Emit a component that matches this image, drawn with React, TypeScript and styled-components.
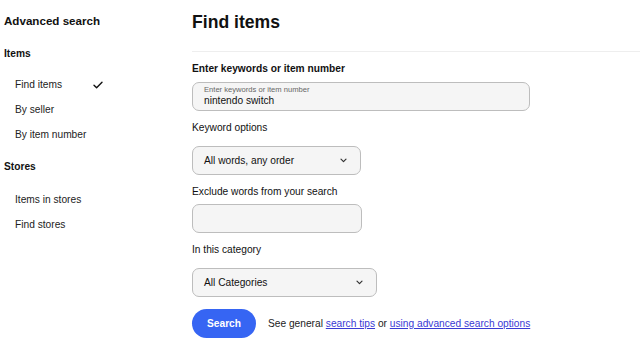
import React from 'react';
import styled, { createGlobalStyle } from 'styled-components';

const GlobalStyle = createGlobalStyle`
  html, body {
    margin: 0;
    padding: 0;
    background: #fff;
    font-family: "Liberation Sans", Arial, sans-serif;
    color: #111;
  }
`;

type NavItem = { label: string; active?: boolean };

const navGroups: { title: string; listGap: number; items: NavItem[] }[] = [
  {
    title: 'Items',
    listGap: 11,
    items: [{ label: 'Find items', active: true }, { label: 'By seller' }, { label: 'By item number' }],
  },
  {
    title: 'Stores',
    listGap: 13,
    items: [{ label: 'Items in stores' }, { label: 'Find stores' }],
  },
];

const Chevron: React.FC = () => (
  <svg width="7" height="5" viewBox="0 0 7 5" fill="none">
    <path d="M1 1.2l2.5 2.5L6 1.2" stroke="#333" strokeWidth="1.2" strokeLinecap="round" strokeLinejoin="round" />
  </svg>
);

const Check: React.FC = () => (
  <svg width="10" height="8" viewBox="0 0 10 8" fill="none">
    <path d="M1 4.2l2.6 2.6L9 1.2" stroke="#111" strokeWidth="1.4" strokeLinecap="round" strokeLinejoin="round" />
  </svg>
);

const App: React.FC = () => {
  return (
    <Page>
      <GlobalStyle />
      <Sidebar>
        <SideTitle>Advanced search</SideTitle>
        {navGroups.map((group) => (
          <NavGroup key={group.title}>
            <GroupTitle>{group.title}</GroupTitle>
            <NavList gap={group.listGap}>
              {group.items.map((item) => (
                <NavLink key={item.label}>
                  <span>{item.label}</span>
                  {item.active && <Check />}
                </NavLink>
              ))}
            </NavList>
          </NavGroup>
        ))}
      </Sidebar>
      <Main>
        <Heading>Find items</Heading>
        <Divider />
        <Form>
          <FieldLabel bold gap={6}>
            Enter keywords or item number
          </FieldLabel>
          <FloatInput>
            <FloatLabel>Enter keywords or item number</FloatLabel>
            <FloatValue>nintendo switch</FloatValue>
          </FloatInput>

          <FieldLabel gap={11}>Keyword options</FieldLabel>
          <SelectBox width={169}>
            <span>All words, any order</span>
            <Chevron />
          </SelectBox>

          <FieldLabel gap={5}>Exclude words from your search</FieldLabel>
          <TextBox width={170} />

          <FieldLabel gap={11}>In this category</FieldLabel>
          <SelectBox width={185}>
            <span>All Categories</span>
            <Chevron />
          </SelectBox>

          <ActionRow>
            <SearchButton>Search</SearchButton>
            <HelpText>
              See general <Link>search tips</Link> or <Link>using advanced search options</Link>
            </HelpText>
          </ActionRow>
        </Form>
        <Divider />
      </Main>
    </Page>
  );
};

export default App;

const Page = styled.div`
  display: flex;
  width: 640px;
  height: 354px;
  overflow: hidden;
`;

const Sidebar = styled.nav`
  width: 188px;
  flex-shrink: 0;
  padding: 13px 0 0 4px;
`;

const SideTitle = styled.div`
  font-size: 11.6px;
  font-weight: 700;
  line-height: 16px;
  color: #111;
`;

const NavGroup = styled.div`
  margin-top: 18px;
  & + & {
    margin-top: 13px;
  }
`;

const GroupTitle = styled.div`
  font-size: 10.2px;
  font-weight: 700;
  line-height: 14px;
  color: #111;
`;

const NavList = styled.div<{ gap: number }>`
  display: flex;
  flex-direction: column;
  margin-top: ${(p) => p.gap}px;
`;

const NavLink = styled.div`
  display: flex;
  align-items: center;
  justify-content: space-between;
  width: 88px;
  height: 25px;
  padding-left: 11px;
  font-size: 10.2px;
  color: #222;
`;

const Main = styled.main`
  flex: 1;
  padding-top: 11px;
`;

const Heading = styled.h1`
  margin: 0;
  font-size: 17.6px;
  font-weight: 700;
  line-height: 22px;
  color: #111;
`;

const Divider = styled.div`
  height: 1px;
  background: #eeeeee;
  margin-top: 18px;
`;

const Form = styled.div`
  display: flex;
  flex-direction: column;
  align-items: flex-start;
  padding-top: 10px;
`;

const FieldLabel = styled.div<{ bold?: boolean; gap: number }>`
  font-size: 10.2px;
  line-height: 14px;
  font-weight: ${(p) => (p.bold ? 700 : 400)};
  color: #111;
  margin-top: ${(p) => (p.bold ? '0' : '10px')};
  margin-bottom: ${(p) => p.gap}px;
`;

const fieldBase = `
  box-sizing: border-box;
  height: 29px;
  border: 1px solid #bdbdbd;
  border-radius: 7px;
  background: #f5f5f5;
`;

const FloatInput = styled.div`
  ${fieldBase}
  width: 338px;
  padding: 2px 11px 0;
  display: flex;
  flex-direction: column;
`;

const FloatLabel = styled.span`
  font-size: 7.6px;
  line-height: 9px;
  color: #666;
`;

const FloatValue = styled.span`
  font-size: 10.2px;
  line-height: 13px;
  color: #111;
`;

const SelectBox = styled.div<{ width: number }>`
  ${fieldBase}
  width: ${(p) => p.width}px;
  display: flex;
  align-items: center;
  justify-content: space-between;
  padding: 0 13px 0 11px;
  font-size: 10.2px;
  color: #111;
`;

const TextBox = styled.div<{ width: number }>`
  ${fieldBase}
  width: ${(p) => p.width}px;
`;

const ActionRow = styled.div`
  display: flex;
  align-items: center;
  gap: 12px;
  margin-top: 12px;
  margin-bottom: 11px;
`;

const SearchButton = styled.button`
  width: 64px;
  height: 29px;
  border: none;
  border-radius: 15px;
  background: #3665f3;
  color: #fff;
  font-family: inherit;
  font-size: 10.2px;
  font-weight: 700;
  cursor: pointer;
`;

const HelpText = styled.span`
  font-size: 10.2px;
  color: #222;
`;

const Link = styled.a`
  color: #3a3ad4;
  text-decoration: underline;
  cursor: pointer;
`;
